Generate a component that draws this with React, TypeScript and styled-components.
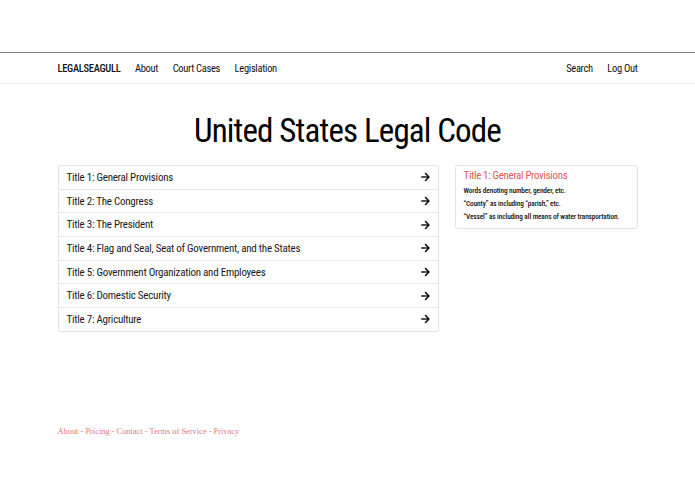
import React from 'react'
import styled, { createGlobalStyle } from 'styled-components'

const GlobalStyle = createGlobalStyle`
  html, body {
    margin: 0;
    padding: 0;
    background: #fff;
  }
  body {
    font-family: Roboto, "Liberation Sans", sans-serif;
    font-stretch: condensed;
    color: #1a1a1a;
  }
`

const Page = styled.div`
  padding-top: 52px;
  min-height: 494px;
  box-sizing: border-box;
`

const NavBar = styled.nav`
  border-top: 1px solid #808080;
  border-bottom: 1px solid #eeeeee;
  height: 30px;
`

const Container = styled.div`
  width: 580px;
  margin: 0 auto;
`

const NavInner = styled(Container)`
  display: flex;
  align-items: center;
  justify-content: space-between;
  height: 100%;
`

const NavGroup = styled.div`
  display: flex;
  align-items: center;
  gap: 14.5px;
`

const NavLink = styled.a<{ $brand?: boolean }>`
  font-size: 10.5px;
  letter-spacing: -0.3px;
  font-weight: ${({ $brand }) => ($brand ? 500 : 400)};
  color: #111;
  text-decoration: none;
`

const Heading = styled.h1`
  margin: 25px 0 12px;
  text-align: center;
  font-weight: normal;
  font-size: 33px;
  letter-spacing: -0.85px;
  line-height: 44px;
  color: #000;
`

const Columns = styled(Container)`
  display: grid;
  grid-template-columns: 381px 183px;
  justify-content: space-between;
  align-items: start;
`

const List = styled.div`
  border: 1px solid #e4e4e4;
  border-radius: 2px;
`

const Row = styled.a`
  display: flex;
  align-items: center;
  justify-content: space-between;
  height: 22.7px;
  padding: 0 7px 0 8px;
  font-size: 11px;
  letter-spacing: -0.25px;
  color: #1a1a1a;
  text-decoration: none;
  & + & {
    border-top: 1px solid #e8e8e8;
  }
`

const Panel = styled.div`
  border: 1px solid #e4e4e4;
  border-radius: 3px;
  padding: 2px 8px 5px;
`

const PanelTitle = styled.div`
  color: #e05a55;
  font-size: 11px;
  letter-spacing: -0.35px;
  line-height: 16px;
`

const PanelLine = styled.div`
  font-size: 7.3px;
  letter-spacing: -0.1px;
  font-weight: 500;
  line-height: 13px;
  color: #111;
  white-space: nowrap;
`

const Footer = styled(Container)`
  margin-top: 94px;
  font-family: "Liberation Serif", serif;
  font-stretch: normal;
  font-size: 8.4px;
  line-height: 12px;
  color: #e8777a;
`

const Arrow = () => (
  <svg width="11" height="10" viewBox="0 0 448 512" fill="#1a1a1a">
    <path d="M190.5 66.9l22.2-22.2c9.4-9.4 24.6-9.4 33.9 0L441 239c9.4 9.4 9.4 24.6 0 33.9L246.6 467.3c-9.4 9.4-24.6 9.4-33.9 0l-22.2-22.2c-9.5-9.5-9.3-25 .4-34.3L311.4 296H24c-13.3 0-24-10.7-24-24v-32c0-13.3 10.7-24 24-24h287.4L190.9 101.2c-9.8-9.3-10-24.8-.4-34.3z" />
  </svg>
)

const titles = [
  'Title 1: General Provisions',
  'Title 2: The Congress',
  'Title 3: The President',
  'Title 4: Flag and Seal, Seat of Government, and the States',
  'Title 5: Government Organization and Employees',
  'Title 6: Domestic Security',
  'Title 7: Agriculture',
]

const App = () => {
  return (
    <Page>
      <GlobalStyle />
      <NavBar>
        <NavInner>
          <NavGroup>
            <NavLink $brand>LEGALSEAGULL</NavLink>
            <NavLink>About</NavLink>
            <NavLink>Court Cases</NavLink>
            <NavLink>Legislation</NavLink>
          </NavGroup>
          <NavGroup>
            <NavLink>Search</NavLink>
            <NavLink>Log Out</NavLink>
          </NavGroup>
        </NavInner>
      </NavBar>

      <Heading>United States Legal Code</Heading>

      <Columns>
        <List>
          {titles.map((t) => (
            <Row key={t}>
              <span>{t}</span>
              <Arrow />
            </Row>
          ))}
        </List>
        <Panel>
          <PanelTitle>Title 1: General Provisions</PanelTitle>
          <PanelLine>Words denoting number, gender, etc.</PanelLine>
          <PanelLine>“County” as including “parish,” etc.</PanelLine>
          <PanelLine>“Vessel” as including all means of water transportation.</PanelLine>
        </Panel>
      </Columns>

      <Footer>About - Pricing - Contact - Terms of Service - Privacy</Footer>
    </Page>
  )
}

export default App
